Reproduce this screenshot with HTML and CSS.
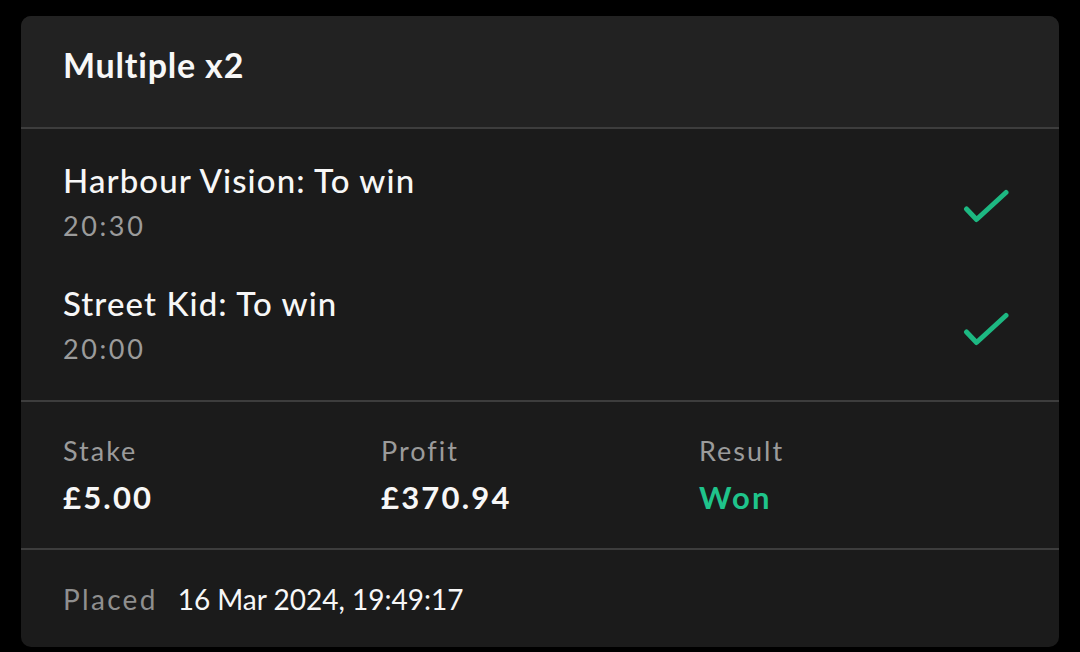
FILE: index.html
```html
<!DOCTYPE html>
<html lang="en">
<head>
<meta charset="utf-8">
<title>Multiple x2</title>
<link rel="stylesheet" href="styles.css">
</head>
<body>
<div class="card">
  <div class="header">
    <h1 class="title">Multiple x2</h1>
  </div>
  <div class="legs">
    <div class="leg">
      <div class="leg-text">
        <div class="leg-name">Harbour Vision: To win</div>
        <div class="leg-time">20:30</div>
      </div>
      <svg class="check" width="54" height="44" viewBox="0 0 54 44"><path d="M3.5 27 L13.5 37.5 L43 10.5" fill="none" stroke="#1db882" stroke-width="5" stroke-linecap="round" stroke-linejoin="round"/></svg>
    </div>
    <div class="leg">
      <div class="leg-text">
        <div class="leg-name">Street Kid: To win</div>
        <div class="leg-time">20:00</div>
      </div>
      <svg class="check" width="54" height="44" viewBox="0 0 54 44"><path d="M3.5 27 L13.5 37.5 L43 10.5" fill="none" stroke="#1db882" stroke-width="5" stroke-linecap="round" stroke-linejoin="round"/></svg>
    </div>
  </div>
  <div class="stats">
    <div class="stat">
      <div class="stat-label">Stake</div>
      <div class="stat-value">£5.00</div>
    </div>
    <div class="stat">
      <div class="stat-label">Profit</div>
      <div class="stat-value">£370.94</div>
    </div>
    <div class="stat">
      <div class="stat-label">Result</div>
      <div class="stat-value won">Won</div>
    </div>
  </div>
  <div class="footer">
    <span class="placed-label">Placed</span>
    <span class="placed-value">16 Mar 2024, 19:49:17</span>
  </div>
</div>
</body>
</html>
```
FILE: styles.css
```css
html, body {
  margin: 0;
  background: #000;
}
body {
  padding: 16px 21px 5px 21px;
  font-family: "Lato", "Liberation Sans", sans-serif;
  color: #f7f7f7;
}
.card {
  width: 1038px;
  height: 631px;
  box-sizing: border-box;
  border-radius: 10px;
  overflow: hidden;
  background: #1b1b1b;
  display: flex;
  flex-direction: column;
}
.header {
  height: 113px;
  box-sizing: border-box;
  background: #222222;
  border-bottom: 2px solid #3d3d3d;
  padding: 29px 42px 0 42px;
}
.title {
  margin: 0;
  font-size: 34px;
  line-height: 40px;
  font-weight: 700;
  letter-spacing: 0.8px;
}
.legs {
  display: flex;
  flex-direction: column;
  gap: 37px;
  padding: 29px 42px 0 42px;
  height: 273px;
  box-sizing: border-box;
  border-bottom: 2px solid #3d3d3d;
}
.leg {
  display: flex;
  align-items: center;
  justify-content: space-between;
}
.leg-name {
  font-size: 33px;
  line-height: 44px;
  font-weight: 500;
  letter-spacing: 1.1px;
}
.leg-time {
  margin-top: 6px;
  font-size: 27px;
  line-height: 36px;
  color: #9b9b9b;
  letter-spacing: 2.6px;
}
.check {
  display: block;
  margin-top: 6px;
}
.stats {
  display: grid;
  grid-template-columns: repeat(3, 1fr);
  padding: 31px 42px 0 42px;
  height: 148px;
  box-sizing: border-box;
  border-bottom: 2px solid #3d3d3d;
}
.stat-label {
  font-size: 27px;
  line-height: 36px;
  color: #9b9b9b;
  letter-spacing: 2px;
}
.stat-value {
  margin-top: 8px;
  font-size: 31px;
  line-height: 40px;
  font-weight: 700;
  letter-spacing: 2.2px;
}
.stat-value.won {
  color: #1fc48b;
}
.footer {
  display: flex;
  align-items: baseline;
  gap: 20px;
  padding: 31px 42px 0 42px;
  font-size: 28px;
  line-height: 36px;
}
.placed-label {
  color: #8f8f8f;
  letter-spacing: 2.3px;
}
.placed-value {
  color: #f7f7f7;
}
```
